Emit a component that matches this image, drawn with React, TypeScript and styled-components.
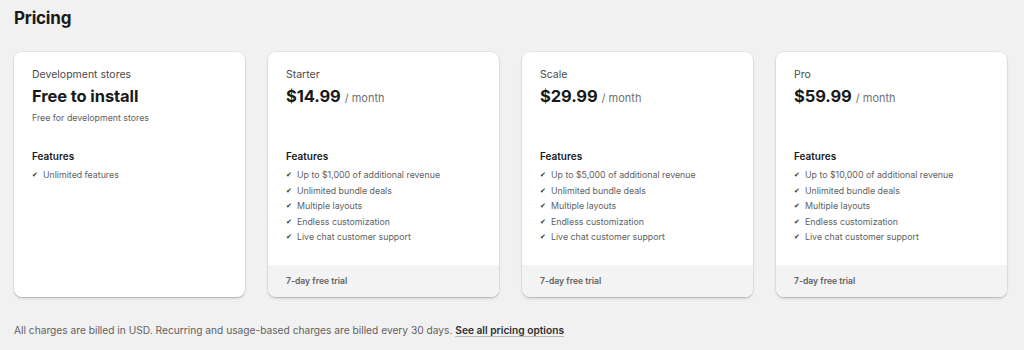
import React from "react";
import styled, { createGlobalStyle } from "styled-components";

const Global = createGlobalStyle`
  html, body { margin: 0; padding: 0; background: #f1f1f1; }
  body { font-family: Inter, "Noto Sans", sans-serif; color: #303030; -webkit-font-smoothing: antialiased; }
`;

const Page = styled.div`
  padding: 7px 17px 0 14px;
  display: flex;
  flex-direction: column;
`;

const Title = styled.h1`
  margin: 0;
  font-size: 17px;
  line-height: 22px;
  font-weight: 700;
  color: #1a1a1a;
  letter-spacing: -0.2px;
`;

const Grid = styled.div`
  margin-top: 23px;
  display: grid;
  grid-template-columns: repeat(4, 1fr);
  gap: 23px;
`;

const Card = styled.div`
  background: #ffffff;
  border-radius: 8px;
  box-shadow: 0 0 0 1px rgba(0, 0, 0, 0.05), 0 1px 0 rgba(0, 0, 0, 0.1), 0 2px 3px rgba(0, 0, 0, 0.1);
  height: 245px;
  display: flex;
  flex-direction: column;
  overflow: hidden;
`;

const Body = styled.div`
  flex: 1;
  padding: 16px 18px 0 18px;
  display: flex;
  flex-direction: column;
`;

const Top = styled.div`
  height: 81px;
  display: flex;
  flex-direction: column;
`;

const Plan = styled.div`
  font-size: 10.5px;
  line-height: 14px;
  color: #4a4a4a;
`;

const PriceRow = styled.div`
  margin-top: 3px;
  display: flex;
  align-items: baseline;
  gap: 4px;
  height: 22px;
`;

const Price = styled.span`
  font-size: 16.5px;
  line-height: 22px;
  font-weight: 700;
  color: #1a1a1a;
  letter-spacing: -0.1px;
`;

const Per = styled.span`
  font-size: 11px;
  color: #707070;
`;

const Sub = styled.div`
  margin-top: 5px;
  font-size: 8.8px;
  line-height: 12px;
  color: #616161;
`;

const FeatTitle = styled.div`
  font-size: 10px;
  line-height: 14px;
  font-weight: 600;
  color: #1a1a1a;
`;

const List = styled.ul`
  list-style: none;
  margin: 4px 0 0 0;
  padding: 0;
  display: flex;
  flex-direction: column;
`;

const Item = styled.li`
  display: flex;
  align-items: center;
  gap: 5px;
  font-size: 8.8px;
  line-height: 15.6px;
  color: #616161;
`;

const Check = styled.span`
  font-size: 7px;
  color: #303030;
  width: 6px;
`;

const Foot = styled.div`
  height: 32px;
  background: #f3f3f3;
  padding: 0 18px;
  display: flex;
  align-items: center;
  font-size: 8.6px;
  font-weight: 600;
  color: #616161;
`;

const Note = styled.p`
  margin: 26px 0 0 0;
  font-size: 10.2px;
  line-height: 14px;
  color: #616161;
`;

const Link = styled.a`
  color: #303030;
  font-weight: 600;
  text-decoration: underline;
  text-decoration-color: #b5b5b5;
  text-underline-offset: 2px;
`;

const common = [
  "Unlimited bundle deals",
  "Multiple layouts",
  "Endless customization",
  "Live chat customer support",
];

const plans = [
  { name: "Starter", price: "$14.99", rev: "$1,000" },
  { name: "Scale", price: "$29.99", rev: "$5,000" },
  { name: "Pro", price: "$59.99", rev: "$10,000" },
];

const Features = ({ items }: { items: string[] }) => (
  <>
    <FeatTitle>Features</FeatTitle>
    <List>
      {items.map((t) => (
        <Item key={t}>
          <Check>✔</Check>
          {t}
        </Item>
      ))}
    </List>
  </>
);

export default function App() {
  return (
    <>
      <Global />
      <Page>
        <Title>Pricing</Title>
        <Grid>
          <Card>
            <Body>
              <Top>
                <Plan>Development stores</Plan>
                <PriceRow>
                  <Price>Free to install</Price>
                </PriceRow>
                <Sub>Free for development stores</Sub>
              </Top>
              <Features items={["Unlimited features"]} />
            </Body>
          </Card>
          {plans.map((p) => (
            <Card key={p.name}>
              <Body>
                <Top>
                  <Plan>{p.name}</Plan>
                  <PriceRow>
                    <Price>{p.price}</Price>
                    <Per>/ month</Per>
                  </PriceRow>
                </Top>
                <Features items={[`Up to ${p.rev} of additional revenue`, ...common]} />
              </Body>
              <Foot>7-day free trial</Foot>
            </Card>
          ))}
        </Grid>
        <Note>
          All charges are billed in USD. Recurring and usage-based charges are billed every 30 days.{" "}
          <Link href="#">See all pricing options</Link>
        </Note>
      </Page>
    </>
  );
}
